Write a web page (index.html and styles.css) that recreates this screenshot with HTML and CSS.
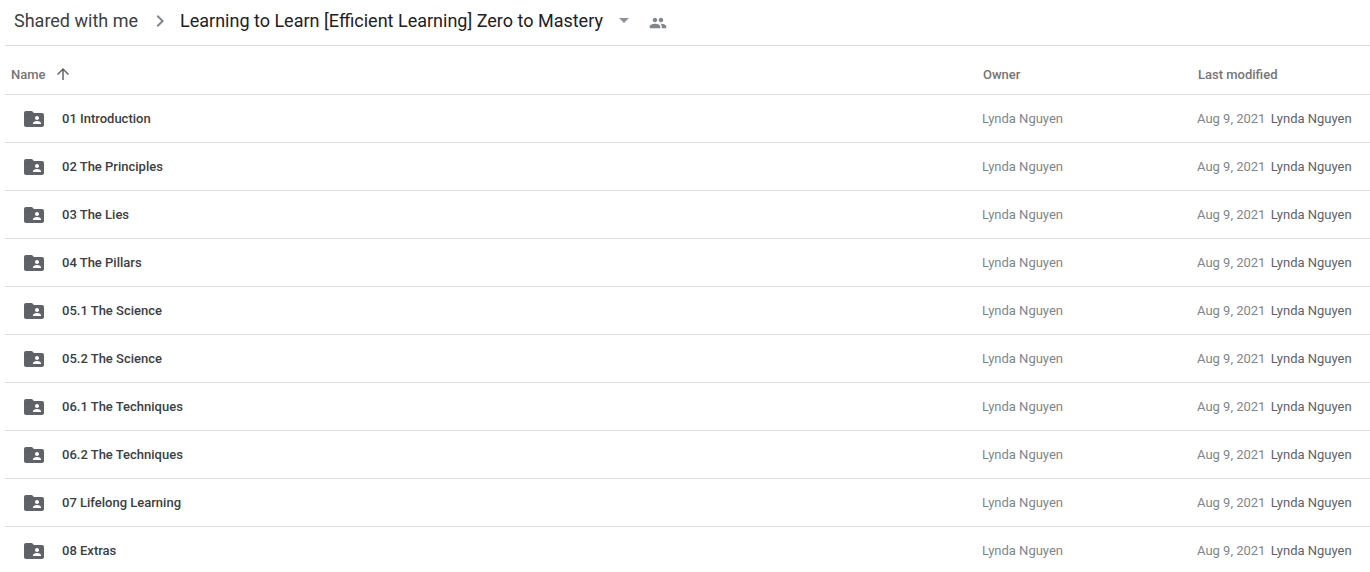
FILE: index.html
```html
<!DOCTYPE html>
<html lang="en">
<head>
  <meta charset="UTF-8">
  <meta name="viewport" content="width=device-width, initial-scale=1.0">
  <title>Learning to Learn [Efficient Learning] Zero to Mastery</title>
  <link rel="stylesheet" href="styles.css">
</head>
<body>
  <!-- Icons shared by the rows -->
  <svg class="sprite" aria-hidden="true">
    <symbol id="folder" viewBox="0 0 24 24">
      <path d="M20 6h-8l-2-2H4c-1.100 0-1.990.9-1.990 2L2 18c0 1.100.9 2 2 2h16c1.100 0 2-.9 2-2V8c0-1.100-.9-2-2-2zm-5 3c1.100 0 2 .9 2 2s-.9 2-2 2-2-.9-2-2 .9-2 2-2zm4 8h-8v-1c0-1.330 2.670-2 4-2s4 .67 4 2v1z"/>
    </symbol>
  </svg>

  <nav class="breadcrumbs" aria-label="Breadcrumb">
    <a class="crumb" href="#">Shared with me</a>
    <svg class="chevron" viewBox="0 0 24 24"><path d="M10 6L8.590 7.410 13.170 12l-4.580 4.590L10 18l6-6z"/></svg>
    <button class="current" type="button">
      Learning to Learn [Efficient Learning] Zero to Mastery
      <svg class="caret" viewBox="0 0 10 5"><path d="M0 0h10L5 5z"/></svg>
    </button>
    <button class="people-btn" type="button" aria-label="Manage people">
      <svg class="people" viewBox="0 0 24 24"><path d="M16 11c1.660 0 2.990-1.340 2.990-3S17.660 5 16 5s-3 1.340-3 3 1.340 3 3 3zm-8 0c1.660 0 2.990-1.340 2.990-3S9.660 5 8 5 5 6.340 5 8s1.340 3 3 3zm0 2c-2.330 0-7 1.170-7 3.500V19h14v-2.500c0-2.330-4.670-3.500-7-3.500zm8 0c-.29 0-.62.02-.97.05 1.160.84 1.970 1.970 1.970 3.450V19h6v-2.500c0-2.330-4.670-3.500-7-3.500z"/></svg>
    </button>
  </nav>

  <table class="files">
    <thead>
      <tr>
        <th class="col-name">
          <button class="sort" type="button">Name
            <svg class="arrow" viewBox="0 0 24 24"><path d="M4 12l1.410 1.410L11 7.830V20h2V7.830l5.580 5.590L20 12l-8-8-8 8z"/></svg>
          </button>
        </th>
        <th class="col-owner">Owner</th>
        <th class="col-modified">Last modified</th>
      </tr>
    </thead>
    <tbody>
      <tr><td class="name"><div class="entry"><svg class="folder"><use href="#folder"/></svg>01 Introduction</div></td><td>Lynda Nguyen</td><td>Aug 9, 2021 <span class="by">Lynda Nguyen</span></td></tr>
      <tr><td class="name"><div class="entry"><svg class="folder"><use href="#folder"/></svg>02 The Principles</div></td><td>Lynda Nguyen</td><td>Aug 9, 2021 <span class="by">Lynda Nguyen</span></td></tr>
      <tr><td class="name"><div class="entry"><svg class="folder"><use href="#folder"/></svg>03 The Lies</div></td><td>Lynda Nguyen</td><td>Aug 9, 2021 <span class="by">Lynda Nguyen</span></td></tr>
      <tr><td class="name"><div class="entry"><svg class="folder"><use href="#folder"/></svg>04 The Pillars</div></td><td>Lynda Nguyen</td><td>Aug 9, 2021 <span class="by">Lynda Nguyen</span></td></tr>
      <tr><td class="name"><div class="entry"><svg class="folder"><use href="#folder"/></svg>05.1 The Science</div></td><td>Lynda Nguyen</td><td>Aug 9, 2021 <span class="by">Lynda Nguyen</span></td></tr>
      <tr><td class="name"><div class="entry"><svg class="folder"><use href="#folder"/></svg>05.2 The Science</div></td><td>Lynda Nguyen</td><td>Aug 9, 2021 <span class="by">Lynda Nguyen</span></td></tr>
      <tr><td class="name"><div class="entry"><svg class="folder"><use href="#folder"/></svg>06.1 The Techniques</div></td><td>Lynda Nguyen</td><td>Aug 9, 2021 <span class="by">Lynda Nguyen</span></td></tr>
      <tr><td class="name"><div class="entry"><svg class="folder"><use href="#folder"/></svg>06.2 The Techniques</div></td><td>Lynda Nguyen</td><td>Aug 9, 2021 <span class="by">Lynda Nguyen</span></td></tr>
      <tr><td class="name"><div class="entry"><svg class="folder"><use href="#folder"/></svg>07 Lifelong Learning</div></td><td>Lynda Nguyen</td><td>Aug 9, 2021 <span class="by">Lynda Nguyen</span></td></tr>
      <tr><td class="name"><div class="entry"><svg class="folder"><use href="#folder"/></svg>08 Extras</div></td><td>Lynda Nguyen</td><td>Aug 9, 2021 <span class="by">Lynda Nguyen</span></td></tr>
    </tbody>
  </table>
</body>
</html>
```
FILE: styles.css
```css
* {
  box-sizing: border-box;
}

html {
  scrollbar-width: none;
}

body {
  margin: 0;
  padding-left: 5px;
  background: #fff;
  color: #3c4043;
  font-family: Roboto, sans-serif;
  font-size: 13px;
}

button {
  padding: 0;
  border: 0;
  background: none;
  font: inherit;
  color: inherit;
  cursor: pointer;
}

svg {
  fill: currentColor;
  flex: none;
}

.sprite {
  display: none;
}

/* Breadcrumb bar */
.breadcrumbs {
  display: flex;
  align-items: center;
  height: 46px;
  padding: 0 9px 4px;
  border-bottom: 1px solid #dadce0;
  font-size: 18px;
  white-space: nowrap;
}

.crumb {
  color: #3c4043;
  text-decoration: none;
}

.chevron {
  width: 24px;
  height: 24px;
  margin: 0 8px 0 10px;
  color: #80868b;
}

.current {
  display: flex;
  align-items: center;
  gap: 16px;
  color: #202124;
}

.caret {
  width: 10px;
  height: 5px;
  color: #8f8f99;
}

.people-btn {
  display: flex;
  margin: 4px 0 0 20px;
}

.people {
  width: 18px;
  height: 18px;
  color: #80868b;
}

/* File list */
.files {
  width: 100%;
  table-layout: fixed;
  border-collapse: separate;
  border-spacing: 0;
}

th,
td {
  height: 48px;
  padding: 0;
  border-bottom: 1px solid #dadce0;
  text-align: left;
  white-space: nowrap;
}

th {
  height: 49px;
  padding: 8px 0 0 1px;
  color: #757575;
  font-weight: 500;
}

.col-name {
  padding-left: 6px;
}

.col-owner {
  width: 215px;
}

.col-modified {
  width: 173px;
}

.sort {
  display: flex;
  align-items: center;
  gap: 8px;
}

.arrow {
  width: 18px;
  height: 18px;
  color: #5f6368;
}

td {
  color: #80868b;
}

.name {
  padding-left: 17px;
  color: #3c4043;
  font-weight: 500;
}

.entry {
  display: flex;
  align-items: center;
  gap: 16px;
}

.folder {
  width: 24px;
  height: 24px;
  color: #5f6368;
}

.by {
  margin-left: 2px;
  color: #5f6368;
}
```
